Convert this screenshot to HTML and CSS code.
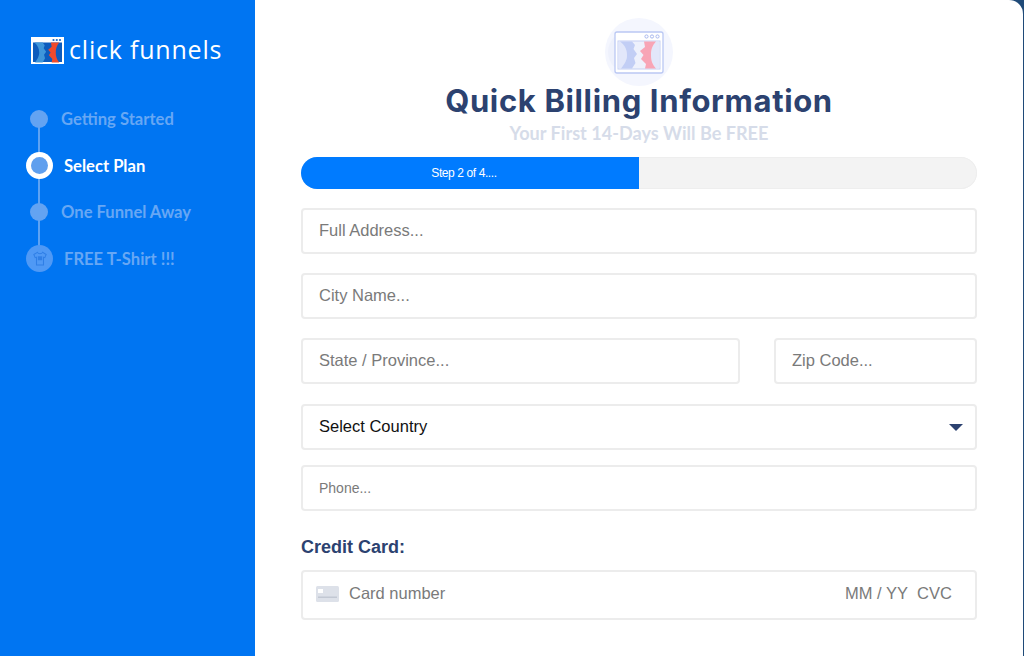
FILE: index.html
```html
<!DOCTYPE html>
<html lang="en">
<head>
<meta charset="utf-8">
<title>Quick Billing Information</title>
<link rel="stylesheet" href="styles.css">
</head>
<body>
<div class="app">
  <aside class="sidebar">
    <div class="brand">
      <svg class="brand-icon" viewBox="0 0 33 27" aria-hidden="true">
        <rect x="1" y="1" width="31" height="25" fill="#0d5cbd" stroke="#fff" stroke-width="2"/>
        <rect x="1" y="1" width="31" height="4.500" fill="#fff"/>
        <circle cx="22.500" cy="3" r="1.100" fill="#1767c8"/><circle cx="25.800" cy="3" r="1.100" fill="#1767c8"/><circle cx="29" cy="3" r="1.100" fill="#1767c8"/>
        <g transform="translate(-6.970 -10.930) scale(.69 .714)">
          <path d="M15 23H27L30 27 28.500 31 32 36 29 40 30.500 45 27 51H16C21 44 22 41 22 37 22 32 20 27 15 23z" fill="#3f96da"/>
          <path d="M39 23H51C47 28 46 32 46 37 46 42 47 46 51 51H40L41 46 36 41 38.500 37 35 33 40 29z" fill="#ef4a2b"/>
        </g>
      </svg>
      <span class="brand-name">click funnels</span>
    </div>
    <ol class="steps">
      <li class="step"><span class="dot"></span><span class="step-label">Getting Started</span></li>
      <li class="step step-active"><span class="dot dot-big"><span class="dot-core"></span></span><span class="step-label">Select Plan</span></li>
      <li class="step"><span class="dot"></span><span class="step-label">One Funnel Away</span></li>
      <li class="step step-shirt">
        <span class="dot dot-big dot-faded">
          <svg class="shirt" viewBox="0 0 16 18" aria-hidden="true">
            <path d="M5 2 1 4.500 2.500 8 4 7.500V16.500H12V7.500L13.500 8 15 4.500 11 2C10 4 6 4 5 2z" fill="none" stroke="#2f7fe6" stroke-width="1.200"/>
            <rect x="5.500" y="6.500" width="5" height="4.500" fill="#2f7fe6"/>
          </svg>
        </span>
        <span class="step-label">FREE T-Shirt !!!</span>
      </li>
    </ol>
  </aside>
  <main class="main">
    <svg class="hero-icon" viewBox="0 0 68 68" aria-hidden="true">
      <circle cx="34" cy="34" r="34" fill="#f4f6fe"/>
      <circle cx="24" cy="34" r="21" fill="#eef1fc"/>
      <rect x="10" y="14" width="48" height="41" rx="2" fill="#fff" stroke="#bac8f3" stroke-width="1.300"/>
      <circle cx="41.500" cy="18.500" r="1.600" fill="none" stroke="#a9b8ee"/><circle cx="47" cy="18.500" r="1.600" fill="none" stroke="#a9b8ee"/><circle cx="52.500" cy="18.500" r="1.600" fill="none" stroke="#a9b8ee"/>
      <rect x="13" y="23" width="42" height="28" fill="#eef1fc" stroke="#c5d0f3"/>
      <path d="M13.500 23.500H15C20 27 22 32 22 37 22 41 21 44 16 50.500H13.500z" fill="#e2e7fa"/>
      <path d="M54.500 23.500H51C47 28 46 32 46 37 46 42 47 46 51 50.500H54.500z" fill="#e2e7fa"/>
      <path d="M15 23.500H27L30 27 28.500 31 32 36 29 40 30.500 45 27 50.500H16C21 44 22 41 22 37 22 32 20 27 15 23.500z" fill="#c2cef5"/>
      <path d="M39 23.500H51C47 28 46 32 46 37 46 42 47 46 51 50.500H40L41 46 36 41 38.500 37 35 33 40 29z" fill="#f8a5b6"/>
    </svg>
    <h1 class="title">Quick Billing Information</h1>
    <p class="subtitle">Your First 14-Days Will Be FREE</p>
    <div class="progress"><div class="progress-bar">Step 2 of 4....</div></div>
    <form class="form">
      <input class="field" type="text" placeholder="Full Address...">
      <input class="field" type="text" placeholder="City Name...">
      <div class="field-row">
        <input class="field field-state" type="text" placeholder="State / Province...">
        <input class="field field-zip" type="text" placeholder="Zip Code...">
      </div>
      <div class="select-wrap">
        <select class="field select"><option>Select Country</option></select>
        <span class="caret"></span>
      </div>
      <input class="field field-phone" type="text" placeholder="Phone...">
      <label class="card-label">Credit Card:</label>
      <div class="card">
        <svg class="card-icon" viewBox="0 0 23 16" aria-hidden="true">
          <rect width="23" height="16" rx="1.500" fill="#dde1e9"/>
          <rect x="2" y="3" width="5" height="4" fill="#fff"/>
          <rect x="2" y="10.500" width="19" height="1.500" fill="#c2c8d3"/>
        </svg>
        <input class="card-input card-number" type="text" placeholder="Card number">
        <input class="card-input card-date" type="text" placeholder="MM / YY">
        <input class="card-input card-cvc" type="text" placeholder="CVC">
      </div>
    </form>
  </main>
</div>
</body>
</html>
```
FILE: styles.css
```css
* { box-sizing: border-box; }
html, body { margin: 0; height: 100%; overflow: hidden; }
body { background: #1f4a78; font-family: "Liberation Sans", Arial, sans-serif; }
.app { display: flex; height: 656px; padding-right: 1px; background: #1f4a78; }

.sidebar { width: 255px; flex: none; background: #0075f2; padding: 35px 0 0 26px; }
.brand { display: flex; align-items: center; gap: 5px; margin-left: 5px; height: 30px; }
.brand-icon { width: 33px; height: 27px; flex: none; }
.brand-name { margin-bottom: 2px; font-family: "Open Sans", sans-serif; font-size: 25px; font-weight: 500; line-height: 28px; color: #fff; letter-spacing: .8px; white-space: nowrap; }

.steps { list-style: none; margin: 31px 0 0; padding: 0; position: relative; }
.steps::before { content: ""; position: absolute; left: 12px; top: 23px; height: 140px; width: 2px; background: #5da2f3; }
.step { position: relative; height: 46.500px; display: flex; align-items: center; font-family: Lato, sans-serif; font-weight: 700; font-size: 16.600px; color: #67a7f4; white-space: nowrap; }
.dot { width: 18px; height: 18px; margin: 0 13px 0 4px; border-radius: 50%; background: #63a3f2; flex: none; }
.dot-big { width: 27px; height: 27px; margin: 0 11px 0 0; display: flex; align-items: center; justify-content: center; }
.step-active { color: #fff; }
.step-active .dot-big { background: #fff; }
.dot-core { width: 17px; height: 17px; border-radius: 50%; background: #5f9fee; }
.dot-faded { background: #4f99f5; }
.shirt { width: 14px; height: 17px; }

.main { flex: 1; min-width: 0; background: #fff; border-top-right-radius: 14px; padding: 18px 46px 0 46px; display: flex; flex-direction: column; align-items: center; }
.hero-icon { width: 68px; height: 68px; flex: none; }
.title { margin: -3px 0 0; font-family: Inter, sans-serif; font-weight: 700; font-size: 31px; letter-spacing: .64px; line-height: 36px; color: #2c4270; white-space: nowrap; }
.subtitle { margin: 3px 0 0; font-family: Lato, sans-serif; font-weight: 700; font-size: 18.100px; line-height: 22px; color: #d6dce9; }
.progress { width: 100%; height: 32px; margin-top: 13px; border-radius: 16px; background: #f3f3f3; box-shadow: inset 0 0 0 1px #eee; overflow: hidden; flex: none; }
.progress-bar { width: 50%; height: 100%; padding-right: 12px; background: #007bff; color: #fff; font-size: 12px; letter-spacing: -.4px; line-height: 32px; text-align: center; }

.form { width: 100%; display: flex; flex-direction: column; margin-top: 19px; }
.field { display: block; width: 100%; height: 46px; margin: 0 0 19px; padding: 0 16px 2px; border: 2px solid #ececec; border-radius: 4px; background: #fff; font-family: "Liberation Sans", Arial, sans-serif; font-size: 16.500px; color: #111; outline: none; }
.field::placeholder, .card-input::placeholder { color: #7a7a7a; opacity: 1; }
.field-row { display: flex; justify-content: space-between; margin-bottom: 1px; }
.field-state { width: 439px; }
.field-zip { width: 203px; }
.select-wrap { position: relative; }
.select { appearance: none; -webkit-appearance: none; margin-bottom: 15px; }
.caret { position: absolute; right: 14px; top: 20px; width: 0; height: 0; border-left: 7px solid transparent; border-right: 7px solid transparent; border-top: 7px solid #2c4270; }
.field-phone { font-size: 14px; margin-bottom: 0; padding-bottom: 0; }
.card-label { margin-top: 27px; font-size: 18px; font-weight: 700; line-height: 18px; color: #2c4270; }
.card { display: flex; align-items: center; height: 50px; margin-top: 14px; padding: 0 22px 2px 13px; border: 2px solid #ececec; border-radius: 4px; }
.card-icon { width: 23px; height: 16px; flex: none; }
.card-input { margin-bottom: 1px; border: 0; padding: 0; outline: none; background: none; font-family: "Liberation Sans", Arial, sans-serif; font-size: 16.500px; color: #111; min-width: 0; }
.card-number { flex: 1; margin-left: 10px; }
.card-date { width: 64px; }
.card-cvc { width: 36px; margin-left: 8px; }
```
